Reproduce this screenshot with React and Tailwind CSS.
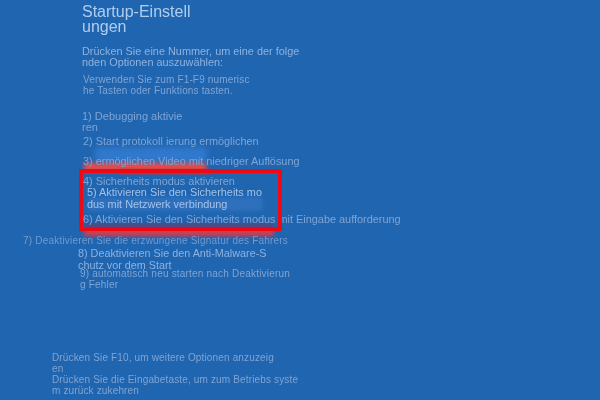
const font = "font-['Liberation_Sans',Arial,sans-serif]"

function Line({ className, children }) {
  return <div className={`whitespace-pre ${className}`}>{children}</div>
}

export default function App() {
  return (
    <div className={`relative h-[400px] w-[600px] overflow-hidden bg-[#1f65b0] ${font} text-[#80a4d3]`}>
      {/* smudges left over around the marked entries */}
      <div className="absolute left-[95px] top-[147px] h-[17px] w-[112px] bg-[#3079cc] blur-[3px]" />
      <div className="absolute left-[84px] top-[163px] h-[8px] w-[122px] bg-[#f04a44] blur-[2px]" />
      <div className="absolute left-[120px] top-[169px] h-[5px] w-[92px] bg-[#d02c30] blur-[1px]" />
      <div className="absolute left-[88px] top-[197px] h-[14px] w-[175px] bg-[#2f70bd] blur-[2px]" />
      <div className="absolute left-[84px] top-[224px] h-[5px] w-[190px] bg-[#5b3f78] blur-[2px]" />
      <div className="absolute left-[84px] top-[229px] h-[7px] w-[190px] bg-[#e03a45] blur-[2px]" />

      <div className="relative flex flex-col blur-[0.3px]">
        <div className="ml-[82px] mt-[4px] text-[16px] leading-[15px] text-[#b0cdf0]">
          <Line>Startup-Einstell</Line>
          <Line>ungen</Line>
        </div>
        <div className="ml-[82px] mt-[12px] text-[10.9px] leading-[11px] text-[#8fb2df]">
          <Line>Drücken Sie eine Nummer, um eine der folge</Line>
          <Line>nden Optionen auszuwählen:</Line>
        </div>
        <div className="ml-[83px] mt-[6px] text-[10px] leading-[11px] tracking-[0.15px]">
          <Line>Verwenden Sie zum F1-F9 numerisc</Line>
          <Line>he Tasten oder Funktions tasten.</Line>
        </div>
        <div className="ml-[82px] mt-[15px] text-[11px] leading-[11px]">
          <Line>1) Debugging aktivie</Line>
          <Line>ren</Line>
        </div>
        <Line className="ml-[83px] mt-[2px] text-[10.9px] leading-[12px]">2) Start protokoll ierung ermöglichen</Line>
        <Line className="ml-[83px] mt-[8px] text-[10.9px] leading-[12px]">3) ermöglichen Video mit niedriger Auflösung</Line>
        <Line className="ml-[83px] mt-[8px] text-[10.9px] leading-[12px]">4) Sicherheits modus aktivieren</Line>
        <div className="ml-[87px] -mt-[1px] text-[10.9px] leading-[12px] text-[#a3c2e8]">
          <Line>5) Aktivieren Sie den Sicherheits mo</Line>
          <Line>dus mit Netzwerk verbindung</Line>
        </div>
        <Line className="ml-[83px] mt-[3px] text-[10.9px] leading-[12px]">6) Aktivieren Sie den Sicherheits modus mit Eingabe aufforderung</Line>
        <Line className="ml-[23px] mt-[10px] text-[10px] leading-[12px] tracking-[0.2px] text-[#6f9bd0]">7) Deaktivieren Sie die erzwungene Signatur des Fahrers</Line>
        <div className="ml-[78px] text-[10.8px] leading-[12px] text-[#8fb2df]">
          <Line>8) Deaktivieren Sie den Anti-Malware-S</Line>
          <Line>chutz vor dem Start</Line>
        </div>
        <div className="ml-[80px] -mt-[3px] text-[10px] leading-[11px] tracking-[0.2px]">
          <Line>9) automatisch neu starten nach Deaktivierun</Line>
          <Line>g Fehler</Line>
        </div>
        <div className="ml-[52px] mt-[62px] text-[10px] leading-[11px] tracking-[0.15px]">
          <Line>Drücken Sie F10, um weitere Optionen anzuzeig</Line>
          <Line>en</Line>
          <Line>Drücken Sie die Eingabetaste, um zum Betriebs syste</Line>
          <Line>m zurück zukehren</Line>
        </div>
      </div>

      {/* red highlight frame */}
      <div className="absolute left-[79px] top-[169px] h-[62px] w-[203px] border-4 border-[#ee0a14]" />
    </div>
  )
}
